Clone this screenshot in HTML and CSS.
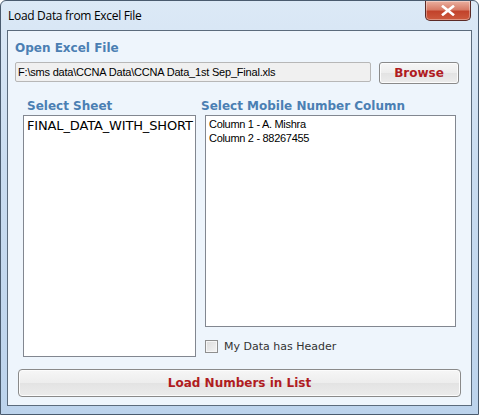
FILE: index.html
```html
<!DOCTYPE html>
<html>
<head>
<meta charset="utf-8">
<link rel="stylesheet" href="styles.css">
</head>
<body>
<div class="window">
  <div class="titlebar">
    <span class="title">Load Data from Excel File</span>
    <button class="close" aria-label="Close">
      <svg width="14" height="11" viewBox="0 0 14 11"><path d="M2 1.5 L12 9.5 M12 1.5 L2 9.5" stroke="#fff" stroke-width="2.6" stroke-linecap="square" fill="none"/></svg>
    </button>
  </div>
  <div class="client">
    <div class="label">Open Excel File</div>
    <div class="path-row">
      <div class="path">F:\sms data\CCNA Data\CCNA Data_1st Sep_Final.xls</div>
      <button class="btn browse">Browse</button>
    </div>
    <div class="lists">
      <div class="col sheet-col">
        <div class="label">Select Sheet</div>
        <div class="listbox sheet-list">
          <div class="sheet-item">FINAL_DATA_WITH_SHORT</div>
        </div>
      </div>
      <div class="col num-col">
        <div class="label">Select Mobile Number Column</div>
        <div class="listbox num-list">
          <div class="num-item">Column 1 - A. Mishra</div>
          <div class="num-item">Column 2 - 88267455</div>
        </div>
        <label class="check-row">
          <span class="checkbox"></span>
          <span class="check-label">My Data has Header</span>
        </label>
      </div>
    </div>
    <button class="btn load">Load Numbers in List</button>
  </div>
</div>
</body>
</html>
```
FILE: styles.css
```css
* { box-sizing: border-box; }
html, body { margin: 0; padding: 0; }
body { width: 479px; height: 415px; overflow: hidden; background: #ffffff; }

.window {
  width: 479px;
  height: 415px;
  background: linear-gradient(180deg, #dce9f6 0%, #c9dcf0 40%, #bcd3ec 100%);
  border: 1px solid #4a5b6e;
  border-radius: 6px 6px 0 0;
  display: flex;
  flex-direction: column;
  padding: 0 6px 8px 6px;
}

.titlebar {
  height: 29px;
  display: flex;
  justify-content: space-between;
  align-items: flex-start;
}
.title {
  font-family: "Open Sans", "Noto Sans", sans-serif;
  font-size: 12px;
  color: #000;
  padding: 6px 0 0 1px;
  letter-spacing: -0.3px;
}
.close {
  width: 46px;
  height: 20px;
  margin-right: 1px;
  border: 1px solid #5b2a26;
  border-top: none;
  border-radius: 0 0 5px 5px;
  background: linear-gradient(180deg, #eab0a0 0%, #d77c67 45%, #c2432b 55%, #cd5a3e 100%);
  display: flex;
  align-items: center;
  justify-content: center;
  padding: 0;
  box-shadow: inset 0 0 0 1px rgba(255,255,255,0.35);
}

.client {
  flex: 1;
  background: #eef5fc;
  border: 1px solid #5b6b7c;
  padding: 10px 0 0 7px;
  display: flex;
  flex-direction: column;
}

.label {
  font-family: "DejaVu Sans", Verdana, sans-serif;
  font-weight: bold;
  font-size: 12px;
  color: #4b7fb3;
  line-height: 15px;
  height: 15px;
  white-space: nowrap;
}

.path-row {
  display: flex;
  align-items: flex-start;
  margin-top: 6px;
}
.path {
  width: 356px;
  height: 20px;
  background: #f0f0f0;
  border: 1px solid #b7b7b7;
  border-radius: 2px;
  font-family: "Liberation Sans", Arial, sans-serif;
  font-size: 11px;
  line-height: 18px;
  padding-left: 2px;
  color: #000;
  letter-spacing: -0.2px;
  white-space: nowrap;
  overflow: hidden;
}

.btn {
  font-family: "DejaVu Sans", Verdana, sans-serif;
  font-weight: bold;
  font-size: 12px;
  color: #b01c1f;
  background: linear-gradient(180deg, #f6f6f6 0%, #ededed 50%, #e3e3e3 51%, #ececec 100%);
  border: 1px solid #8a8a8a;
  border-radius: 3px;
  padding: 0;
  box-shadow: inset 0 0 0 1px #fcfcfc;
}
.browse {
  width: 80px;
  height: 22px;
  margin-left: 8px;
}

.lists {
  display: flex;
  margin-top: 15px;
}
.sheet-col { margin-left: 8px; width: 172px; }
.num-col { margin-left: 6px; display: flex; flex-direction: column; }
.sheet-col .label { padding-left: 4px; }

.listbox {
  background: #fff;
  border: 1px solid #828790;
  margin-top: 1px;
  overflow: hidden;
}
.sheet-list {
  width: 173px;
  height: 242px;
  padding: 2px 0 0 3px;
}
.sheet-item {
  font-family: "DejaVu Sans", Verdana, sans-serif;
  font-size: 13px;
  letter-spacing: -0.15px;
  line-height: 15px;
  white-space: nowrap;
  color: #000;
}
.num-list {
  width: 251px;
  height: 212px;
  padding: 1px 0 0 3px;
  margin-left: 4px;
}
.num-item {
  white-space: nowrap;
  font-family: "Liberation Sans", Arial, sans-serif;
  font-size: 11px;
  line-height: 14px;
  color: #000;
  letter-spacing: -0.3px;
}

.check-row {
  display: flex;
  align-items: center;
  margin-top: 13px;
  margin-left: 4px;
}
.checkbox {
  width: 13px;
  height: 13px;
  border: 1px solid #8f8f8f;
  background: linear-gradient(135deg, #dcdcdc 0%, #f4f4f4 100%);
  box-shadow: inset 0 0 0 1px #f6f6f6;
}
.check-label {
  font-family: "DejaVu Sans", Verdana, sans-serif;
  font-size: 11px;
  color: #333;
  margin-left: 6px;
}

.load {
  width: 443px;
  height: 28px;
  margin-top: 12px;
  margin-left: 3px;
  border-radius: 4px;
}
```
